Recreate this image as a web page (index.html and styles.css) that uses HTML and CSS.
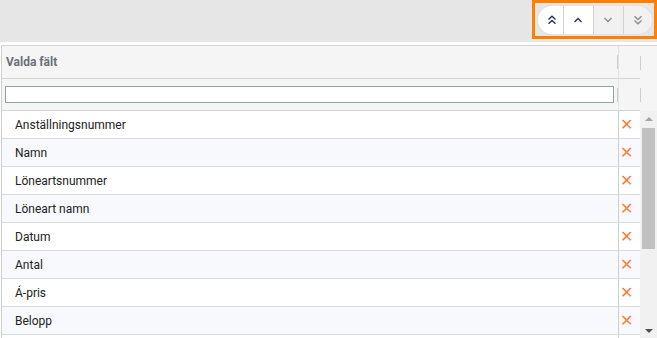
FILE: index.html
```html
<!DOCTYPE HTML>
<html>
<head>
<link rel="stylesheet" href="styles.css">
</head>
<body>

<div class="toolbar">
    <div class="movebox">
        <div class="pill">
            <div class="btn first">
                <svg width="10" height="10" viewBox="0 0 10 10"><polyline points="1.5,4.5 5,1.2 8.5,4.5"/><polyline points="1.5,8.8 5,5.5 8.5,8.8"/></svg>
            </div>
            <div class="btn">
                <svg width="10" height="6" viewBox="0 0 10 6"><polyline points="1.5,5 5,1.5 8.5,5"/></svg>
            </div>
            <div class="btn off">
                <svg width="10" height="6" viewBox="0 0 10 6"><polyline points="1.5,1 5,4.5 8.5,1"/></svg>
            </div>
            <div class="btn off last">
                <svg width="10" height="10" viewBox="0 0 10 10"><polyline points="1.5,1.2 5,4.5 8.5,1.2"/><polyline points="1.5,5.5 5,8.8 8.5,5.5"/></svg>
            </div>
        </div>
    </div>
</div>

<div class="grid">
    <div class="hrow head">
        <div class="c1"><span class="title">Valda fält</span><span class="handle"></span></div>
        <div class="c2"></div>
        <div class="c3"><span class="handle"></span></div>
    </div>
    <div class="hrow filter">
        <div class="c1"><input type="text" class="filterbox"><span class="handle"></span></div>
        <div class="c2"></div>
        <div class="c3"><span class="handle"></span></div>
    </div>
    <div class="body">
        <div class="rows">
            <div class="row"><div class="name">Anställningsnummer</div><div class="del">&#x2715;</div></div>
            <div class="row"><div class="name">Namn</div><div class="del">&#x2715;</div></div>
            <div class="row"><div class="name">Löneartsnummer</div><div class="del">&#x2715;</div></div>
            <div class="row"><div class="name">Löneart namn</div><div class="del">&#x2715;</div></div>
            <div class="row"><div class="name">Datum</div><div class="del">&#x2715;</div></div>
            <div class="row"><div class="name">Antal</div><div class="del">&#x2715;</div></div>
            <div class="row"><div class="name">Á-pris</div><div class="del">&#x2715;</div></div>
            <div class="row"><div class="name">Belopp</div><div class="del">&#x2715;</div></div>
            <div class="row"><div class="name"></div><div class="del"></div></div>
        </div>
        <div class="scrollbar">
            <div class="arrow up"></div>
            <div class="thumb"></div>
            <div class="track"></div>
            <div class="arrow down"></div>
        </div>
    </div>
</div>

</body>
</html>
```

FILE: styles.css
```css
html, body {
    margin: 0;
    height: 338px;
    overflow: hidden;
    background: #fff;
    font-family: Roboto, "Liberation Sans", sans-serif;
    font-size: 12px;
    color: #222;
}
.toolbar {
    height: 42px;
    background: #e6e6e6;
    display: flex;
    justify-content: flex-end;
    align-items: flex-start;
}
.movebox {
    width: 119px;
    height: 33px;
    border: 3px solid #ff8000;
    display: flex;
    align-items: center;
    justify-content: center;
}
.pill {
    display: flex;
    height: 28px;
    border-radius: 14px;
    overflow: hidden;
    box-shadow: 0 0 1px rgba(0,0,0,0.15);
}
.btn {
    width: 29px;
    display: flex;
    align-items: center;
    justify-content: center;
    background: #fff;
    border-left: 1px solid #d2d2d2;
}
.btn.first {
    width: 21px;
    padding-left: 4px;
    border-left: none;
}
.btn.last {
    width: 28px;
}
.btn.off {
    background: #f1f1f1;
}
.btn svg polyline {
    fill: none;
    stroke: #27304a;
    stroke-width: 1.4;
}
.btn.off svg polyline {
    stroke: #8c8c8c;
}
.grid {
    margin-top: 3px;
    margin-left: 1px;
    border-left: 1px solid #cfcfcf;
    border-top: 1px solid #d4d4d4;
}
.hrow {
    display: grid;
    grid-template-columns: 617px 21px 17px;
    background: #f4f5f4;
}
.hrow .c1 {
    border-right: 1px solid #e2e2e2;
    border-bottom: 1px solid #d4d4d4;
    display: flex;
    align-items: center;
}
.hrow .c2 {
    border-bottom: 1px solid #d4d4d4;
}
.hrow .c3 {
    display: flex;
    align-items: center;
}
.head {
    height: 33px;
}
.filter {
    height: 32px;
}
.title {
    flex: 1;
    padding-left: 4px;
    font-weight: bold;
    color: #6b6f79;
    font-size: 12px;
}
.filterbox {
    flex: 1;
    margin: 0 3px;
    height: 17px;
    box-sizing: border-box;
    border: 1px solid #8fa39f;
    padding: 0;
    background: #fff;
    outline: none;
}
.handle {
    width: 1px;
    height: 14px;
    background: #cdcdcd;
}
.body {
    display: flex;
}
.rows {
    width: 638px;
}
.row {
    display: grid;
    grid-template-columns: 617px 21px;
    height: 28px;
    background: #fff;
}
.row:nth-child(even) {
    background: #f8f9fc;
}
.row .name {
    padding-left: 13px;
    padding-top: 2px;
    line-height: 25px;
    border-right: 1px solid #cfcfcf;
    border-bottom: 1px solid #d9d9d9;
}
.row .del {
    border-bottom: 1px solid #d9d9d9;
    font-family: "DejaVu Sans", sans-serif;
    font-size: 16px;
    line-height: 27px;
    color: #f5833a;
    padding-left: 1px;
    overflow: hidden;
}
.scrollbar {
    width: 17px;
    background: #f1f1f1;
    display: flex;
    flex-direction: column;
    align-items: center;
    height: 227px;
}
.arrow {
    width: 0;
    height: 0;
    border-left: 4px solid transparent;
    border-right: 4px solid transparent;
}
.arrow.up {
    margin-top: 6px;
    border-bottom: 4px solid #a3a3a3;
}
.arrow.down {
    margin-bottom: 5px;
    border-top: 4px solid #505050;
}
.thumb {
    margin-top: 7px;
    width: 13px;
    height: 121px;
    background: #c1c1c1;
}
.track {
    flex: 1;
}
```
